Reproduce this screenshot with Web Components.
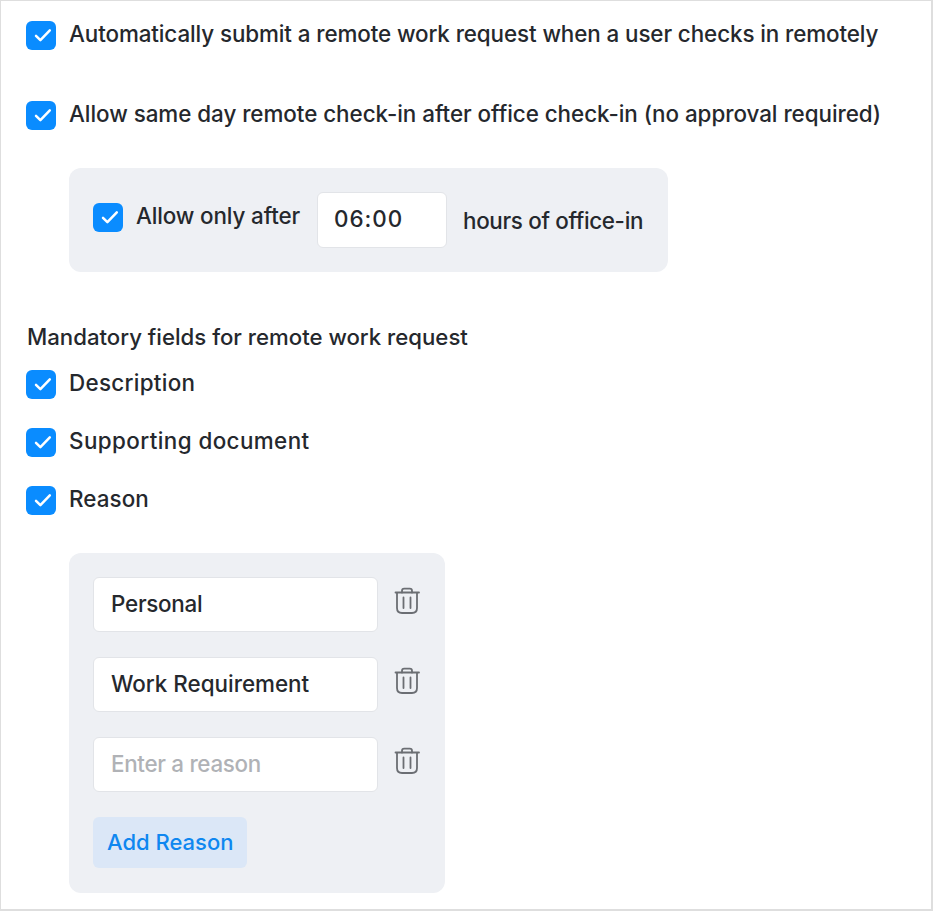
<!DOCTYPE html>
<html>
<head>
<meta charset="utf-8">
<title>Remote work settings</title>
<style>
    html, body { margin: 0; padding: 0; background: #fff; }
    body { font-family: Inter, "Noto Sans", sans-serif; color: #25282d; }
</style>
</head>
<body>
<settings-page>
    <check-row style="--top: 20px; --ls: -0.095px">Automatically submit a remote work request when a user checks in remotely</check-row>
    <check-row style="--top: 51px; --ls: -0.035px">Allow same day remote check-in after office check-in (no approval required)</check-row>
    <gray-panel style="--top: 38px; --width: 599px">
        <div style="display: flex; align-items: flex-start">
            <check-row style="--top: 11px; --ls: -0.13px">Allow only after</check-row>
            <text-box style="--width: 130px; --h: 56px; --px: 16px; --pb: 4px; --ls: 1px; margin-left: 17px">06:00</text-box>
            <span style="margin: 15px 0 0 16px; line-height: 28px; font-size: var(--fs); font-weight: var(--fw); letter-spacing: -0.33px; white-space: nowrap">hours of office-in</span>
        </div>
    </gray-panel>
    <section-title>Mandatory fields for remote work request</section-title>
    <check-row style="--top: 19px; --ls: 0.3px">Description</check-row>
    <check-row style="--top: 29px; --ls: 0.42px">Supporting document</check-row>
    <check-row style="--top: 29px; --ls: 0.1px">Reason</check-row>
    <gray-panel style="--top: 38px; --width: 376px; --pb: 25px">
        <reason-row style="--top: 0px; --ls: -0.25px">Personal</reason-row>
        <reason-row style="--top: 25px">Work Requirement</reason-row>
        <reason-row style="--top: 25px; --ls: -0.3px" placeholder>Enter a reason</reason-row>
        <add-button>Add Reason</add-button>
    </gray-panel>
</settings-page>

<script>
class SettingsPage extends HTMLElement {
    constructor() {
        super();
        this.attachShadow({mode: 'open'}).innerHTML = `
            <style>
                :host {
                    display: block;
                    box-sizing: border-box;
                    width: 933px;
                    height: 911px;
                    padding: 0 25px;
                    border: 1px solid #dedede;
                    border-width: 1px 2px 2px 1px;
                    overflow: hidden;
                    --fs: 22.4px;
                    --fw: 450;
                }
            </style>
            <slot></slot>`;
    }
}

class CheckRow extends HTMLElement {
    constructor() {
        super();
        this.attachShadow({mode: 'open'}).innerHTML = `
            <style>
                :host {
                    display: flex;
                    align-items: flex-start;
                    margin-top: var(--top, 0);
                    font-size: var(--fs);
                    font-weight: var(--fw);
                    letter-spacing: var(--ls, 0);
                    line-height: 28px;
                    white-space: nowrap;
                }
                .box {
                    flex: none;
                    width: 30px;
                    height: 29px;
                    border-radius: 6px;
                    background: #0a8cff;
                }
                svg { display: block; }
                .label { margin: -1px 0 0 13px; }
            </style>
            <span class="box">
                <svg width="30" height="29" viewBox="0 0 30 29" fill="none">
                    <path d="M10 14.800l4.400 4.400 9.400-9.800" stroke="#fff" stroke-width="2.500" stroke-linecap="round" stroke-linejoin="round"/>
                </svg>
            </span>
            <span class="label"><slot></slot></span>`;
    }
}

class GrayPanel extends HTMLElement {
    constructor() {
        super();
        this.attachShadow({mode: 'open'}).innerHTML = `
            <style>
                :host {
                    display: block;
                    box-sizing: border-box;
                    width: var(--width);
                    margin: var(--top, 0) 0 0 43px;
                    padding: 24px 24px var(--pb, 24px);
                    border-radius: 12px;
                    background: #eef0f4;
                }
            </style>
            <slot></slot>`;
    }
}

class SectionTitle extends HTMLElement {
    constructor() {
        super();
        this.attachShadow({mode: 'open'}).innerHTML = `
            <style>
                :host {
                    display: block;
                    margin: 51px 0 0 1px;
                    font-size: 22.2px;
                    font-weight: 500;
                    line-height: 28px;
                    white-space: nowrap;
                }
            </style>
            <slot></slot>`;
    }
}

class TextBox extends HTMLElement {
    constructor() {
        super();
        this.attachShadow({mode: 'open'}).innerHTML = `
            <style>
                :host {
                    display: flex;
                    flex: none;
                    align-items: center;
                    box-sizing: border-box;
                    width: var(--width);
                    height: var(--h, 55px);
                    padding: 0 var(--px, 17px) var(--pb, 2px);
                    border: 1px solid #e2e4e8;
                    border-radius: 6px;
                    background: #fff;
                    font-size: var(--fs);
                    font-weight: var(--fw);
                    letter-spacing: var(--ls, 0);
                    color: var(--text, #25282d);
                    white-space: nowrap;
                }
            </style>
            <slot></slot>`;
    }
}

class ReasonRow extends HTMLElement {
    constructor() {
        super();
        const hint = this.hasAttribute('placeholder') ? '--text: #b0b2b6' : '';
        this.attachShadow({mode: 'open'}).innerHTML = `
            <style>
                :host {
                    display: flex;
                    align-items: flex-start;
                    gap: 16px;
                    margin-top: var(--top, 0);
                }
                svg { display: block; margin-top: 10px; }
            </style>
            <text-box style="--width: 285px; --pb: 2px; ${hint}"><slot></slot></text-box>
            <svg width="26" height="28" viewBox="0 0 26 28" fill="none" stroke="#6b6e73" stroke-width="1.800" stroke-linecap="round" stroke-linejoin="round">
                <path d="M1.500 5.500h23.500"/>
                <path d="M8 5.500V3.800C8 2.500 8.900 1.600 10.200 1.600h5.600c1.300 0 2.200.9 2.200 2.200v1.700"/>
                <path d="M3 6v15c0 3 2 5 5 5h10c3 0 5-2 5-5V6"/>
                <path d="M9.500 10.500v10.500M16.500 10.500v10.500"/>
            </svg>`;
    }
}

class AddButton extends HTMLElement {
    constructor() {
        super();
        this.attachShadow({mode: 'open'}).innerHTML = `
            <style>
                :host {
                    display: flex;
                    align-items: center;
                    box-sizing: border-box;
                    width: 154px;
                    height: 51px;
                    margin-top: 25px;
                    padding: 0 14px 2px;
                    border-radius: 6px;
                    background: #dbe7f7;
                    color: #0f87f0;
                    font-size: 22px;
                    font-weight: var(--fw);
                    white-space: nowrap;
                }
            </style>
            <slot></slot>`;
    }
}

customElements.define('settings-page', SettingsPage);
customElements.define('check-row', CheckRow);
customElements.define('gray-panel', GrayPanel);
customElements.define('section-title', SectionTitle);
customElements.define('text-box', TextBox);
customElements.define('reason-row', ReasonRow);
customElements.define('add-button', AddButton);
</script>
</body>
</html>
